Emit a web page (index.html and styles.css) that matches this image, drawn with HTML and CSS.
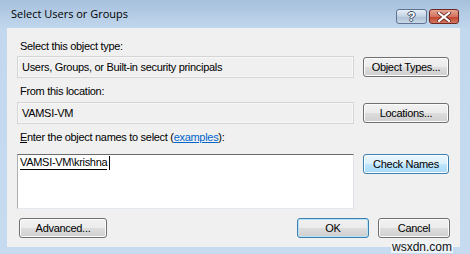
FILE: index.html
```html
<!DOCTYPE html>
<html lang="en">
<head>
  <meta charset="UTF-8">
  <link rel="stylesheet" href="styles.css">
  <title>Select Users or Groups</title>
</head>
<body>
  <!-- dialog window -->
  <div class="window">
    <div class="titlebar">
      <div class="title">Select Users or Groups</div>
      <div class="caption-buttons">
        <div class="cap help">?</div>
        <div class="cap close">
          <svg width="14" height="10" viewBox="0 0 14 10">
            <path d="M2 1 L12 9 M12 1 L2 9" stroke="#5a1f18" stroke-width="3.6" stroke-linecap="square"/>
            <path d="M2 1 L12 9 M12 1 L2 9" stroke="#fff" stroke-width="2.2" stroke-linecap="square"/>
          </svg>
        </div>
      </div>
    </div>

    <div class="client">
      <div class="label">Select this object type:</div>
      <div class="row">
        <div class="field">Users, Groups, or Built-in security principals</div>
        <div class="btn">Object Types...</div>
      </div>

      <div class="label second">From this location:</div>
      <div class="row">
        <div class="field">VAMSI-VM</div>
        <div class="btn">Locations...</div>
      </div>

      <div class="label second"><u>E</u>nter the object names to select (<a href="#" class="link">examples</a>):</div>
      <div class="row names-row">
        <div class="names"><span class="resolved">VAMSI-VM\krishna</span><span class="caret"></span></div>
        <div class="btn hover">Check Names</div>
      </div>

      <div class="footer">
        <div class="btn advanced">Advanced...</div>
        <div class="footer-right">
          <div class="btn small default">OK</div>
          <div class="btn small">Cancel</div>
        </div>
      </div>
    </div>
    <div class="watermark">wsxdn.com</div>
  </div>
</body>
</html>
```

FILE: styles.css
```css
body {
  margin: 0;
  font-family: "Liberation Sans", Arial, sans-serif;
}

.window {
  position: relative;
  width: 470px;
  height: 254px;
  background: linear-gradient(#a7c0dc, #c2d8ee 30px, #c6dbf0);
  display: flex;
  flex-direction: column;
  overflow: hidden;
}

.titlebar {
  height: 28px;
  display: flex;
  align-items: flex-start;
  justify-content: space-between;
}

.title {
  font-family: "Open Sans", sans-serif;
  font-size: 11px;
  color: #000;
  padding: 6px 0 0 11px;
}

.caption-buttons {
  display: flex;
  gap: 2px;
  padding: 9px 11px 0 0;
}

.cap {
  height: 13px;
  border: 1px solid #5e7391;
  border-radius: 3px;
  display: flex;
  align-items: center;
  justify-content: center;
}

.help {
  width: 29px;
  background: linear-gradient(#e6eef7, #c3d2e3 50%, #aebfd4 51%, #c9d8e8);
  color: #fff;
  font-size: 13px;
  font-weight: bold;
  line-height: 13px;
  text-shadow: 1px 0 #3a4d68, -1px 0 #3a4d68, 0 1px #3a4d68, 0 -1px #3a4d68;
}

.close {
  width: 28px;
  border-color: #6e2a22;
  background: linear-gradient(#e6a596, #d2745f 50%, #c0412a 51%, #d27560);
}

.client {
  flex: 1;
  margin: 0 10px 7px 7px;
  background: #f0f0f0;
  padding: 11px 10px 0 10px;
  font-size: 11px;
  letter-spacing: -0.3px;
  color: #000;
  display: flex;
  flex-direction: column;
}

.label {
  height: 15px;
  line-height: 15px;
  padding-left: 3px;
  margin-bottom: 2px;
}

.label.second {
  margin-top: 6px;
  margin-bottom: 3px;
}

.link {
  color: #0066cc;
}

.row {
  display: flex;
  align-items: center;
  gap: 9px;
}

.field {
  width: 331px;
  height: 20px;
  line-height: 20px;
  padding-left: 4px;
  border: 1px solid #d5d5d5;
  box-shadow: inset 0 0 0 1px #f7f7f7;
  background: #f0f0f0;
}

.btn {
  width: 84px;
  height: 18px;
  line-height: 18px;
  text-align: center;
  border: 1px solid #707070;
  border-radius: 3px;
  background: linear-gradient(#f2f2f2, #ebebeb 50%, #dddddd 51%, #cfcfcf);
  box-shadow: inset 0 0 0 1px #fcfcfc;
  font-size: 11px;
}

.btn.advanced {
  width: 86px;
}

.btn.small {
  width: 70px;
}

.btn.hover {
  border-color: #3c7fb1;
  background: linear-gradient(#eaf6fd, #d9f0fc 50%, #bee6fd 51%, #a7d9f5);
}

.btn.default {
  border-color: #3c7fb1;
  box-shadow: inset 0 0 0 1px #b8e2f8;
}

.names-row {
  align-items: flex-start;
  margin-top: 6px;
}

.names {
  width: 333px;
  height: 52px;
  background: #fff;
  border: 1px solid;
  border-color: #6b6b6b #e2e3ea #e3e9ef #abadb3;
  padding: 1px 0 0 2px;
  line-height: 14px;
  display: flex;
  align-items: flex-start;
  box-sizing: content-box;
}

.resolved {
  border-bottom: 1px solid #000;
  line-height: 13px;
}

.caret {
  width: 1px;
  height: 14px;
  background: #000;
  margin-left: 2px;
}

.footer {
  margin-top: 9px;
  display: flex;
  justify-content: space-between;
  padding-left: 2px;
}

.footer-right {
  display: flex;
  gap: 9px;
}

.watermark {
  position: absolute;
  right: 17px;
  bottom: 1px;
  font-size: 12px;
  color: #111;
  background: rgba(240, 244, 248, 0.85);
  padding: 0 1px;
  line-height: 12px;
}
```
